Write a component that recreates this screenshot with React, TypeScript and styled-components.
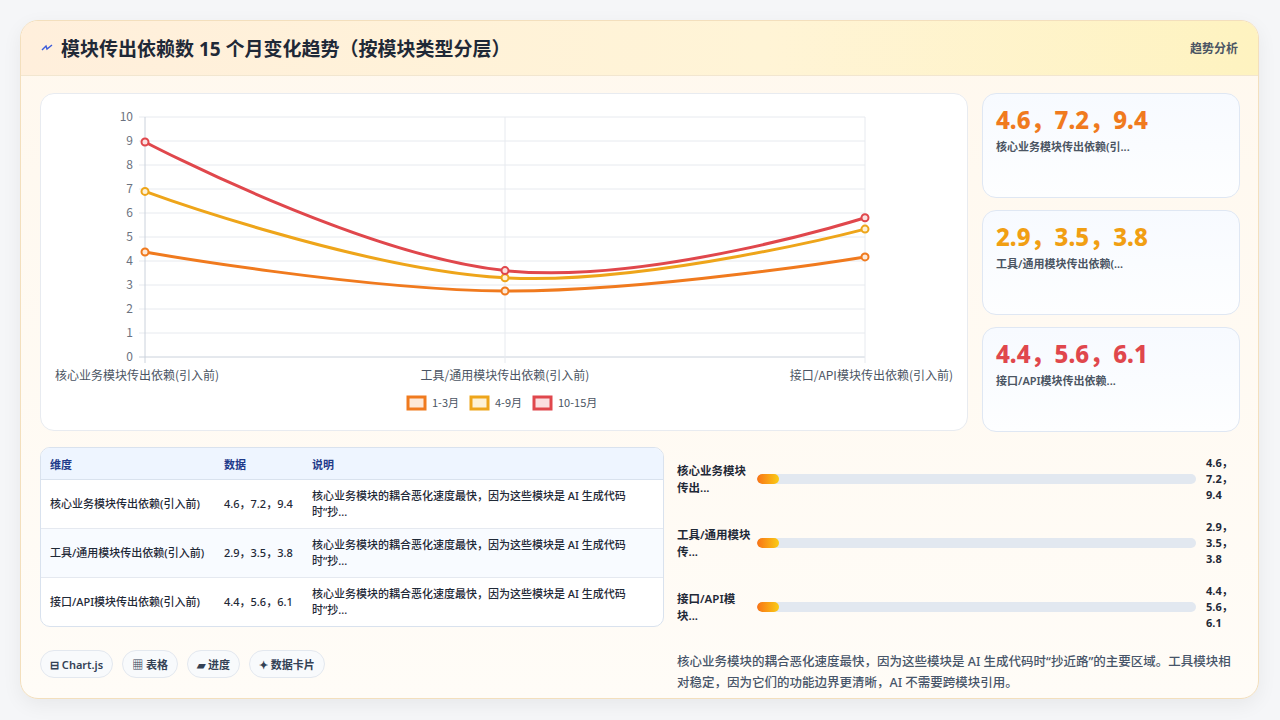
import React from 'react';
import styled, { createGlobalStyle } from 'styled-components';

const Global = createGlobalStyle`
  body { margin: 0; background: #f5f6f8; font-family: "Noto Sans", "Noto Sans CJK SC", sans-serif; }
`;

const Page = styled.div`
  width: 1280px;
  height: 720px;
  padding: 20px;
  box-sizing: border-box;
`;

const Card = styled.div`
  height: 679px;
  width: 1239px;
  box-sizing: border-box;
  border-radius: 18px;
  border: 1px solid #f3dfbd;
  background: linear-gradient(180deg, #fff8ee 0%, #fffcf7 100%);
  box-shadow: 0 6px 20px rgba(0, 0, 0, 0.06);
  overflow: hidden;
  display: flex;
  flex-direction: column;
`;

const Header = styled.div`
  height: 55px;
  box-sizing: border-box;
  padding: 0 20px;
  display: flex;
  align-items: center;
  justify-content: space-between;
  background: linear-gradient(90deg, #ffefdc 0%, #fff4d6 60%, #fef3c0 100%);
  border-bottom: 1px solid #f2e6d0;
`;

const Title = styled.h1`
  margin: 0;
  font-size: 19px;
  font-weight: 700;
  color: #1f2937;
  display: flex;
  align-items: center;
  gap: 8px;
`;

const HeaderTag = styled.span`
  font-size: 12px;
  font-weight: 600;
  color: #4b5563;
`;

const Body = styled.div`
  flex: 1;
  padding: 17px 18px 0 19px;
  display: flex;
  flex-direction: column;
  gap: 15px;
`;

const TopRow = styled.div`
  display: flex;
  gap: 14px;
`;

const ChartCard = styled.div`
  width: 928px;
  height: 338px;
  box-sizing: border-box;
  background: #fff;
  border: 1px solid #e8ebf0;
  border-radius: 14px;
  flex-shrink: 0;
`;

const Stats = styled.div`
  flex: 1;
  display: flex;
  flex-direction: column;
  gap: 12px;
`;

const StatCard = styled.div`
  height: 105px;
  box-sizing: border-box;
  padding: 10px 13px;
  background: linear-gradient(180deg, #f7faff 0%, #fdfeff 100%);
  border: 1px solid #dfe7f3;
  border-radius: 14px;
`;

const StatValue = styled.div<{ $color: string }>`
  font-size: 24px;
  font-weight: 800;
  color: ${(p) => p.$color};
  line-height: 32px;
`;

const StatLabel = styled.div`
  font-size: 11px;
  font-weight: 600;
  color: #4b5563;
  margin-top: 2px;
`;

const BottomRow = styled.div`
  display: flex;
  gap: 13px;
`;

const LeftCol = styled.div`
  width: 624px;
  display: flex;
  flex-direction: column;
  gap: 23px;
`;

const Table = styled.table`
  width: 100%;
  table-layout: fixed;
  border-collapse: separate;
  border-spacing: 0;
  border: 1px solid #d9e2ee;
  border-radius: 10px;
  overflow: hidden;
  font-size: 11px;
  background: #fff;
`;

const Th = styled.th<{ $w?: number }>`
  box-sizing: border-box;
  width: ${(p) => (p.$w ? `${p.$w}px` : 'auto')};
  text-align: left;
  font-weight: 600;
  color: #1e3a8a;
  background: #eef5ff;
  padding: 0 9px;
  height: 32px;
  border-bottom: 1px solid #d9e2ee;
`;

const Td = styled.td`
  color: #1f2937;
  font-weight: 500;
  padding: 0 9px;
  height: 48px;
  line-height: 16px;
  vertical-align: middle;
  tr:not(:last-child) > & { border-bottom: 1px solid #e5e9f0; }
  tr:nth-child(even) > & { background: #f8fbff; }
`;

const Chips = styled.div`
  display: flex;
  gap: 9px;
`;

const Chip = styled.span`
  height: 28px;
  box-sizing: border-box;
  padding: 0 9px;
  display: inline-flex;
  align-items: center;
  gap: 3px;
  font-size: 11px;
  font-weight: 600;
  color: #334155;
  border: 1px solid #e3e8ef;
  background: #f8fafc;
  border-radius: 14px;
`;

const RightCol = styled.div`
  flex: 1;
  display: flex;
  flex-direction: column;
`;

const BarRow = styled.div`
  height: 64px;
  display: flex;
  align-items: center;
  gap: 6px;
`;

const BarLabel = styled.div`
  width: 74px;
  font-size: 11.5px;
  font-weight: 600;
  color: #1f2937;
  line-height: 17px;
`;

const Track = styled.div`
  flex: 1;
  height: 10px;
  border-radius: 5px;
  background: #e2e8f0;
  overflow: hidden;
`;

const Fill = styled.div`
  height: 100%;
  border-radius: 5px;
  background: linear-gradient(90deg, #f97316, #facc15);
`;

const BarValue = styled.div`
  width: 34px;
  padding-left: 4px;
  font-size: 11px;
  font-weight: 700;
  color: #1f2937;
  line-height: 16px;
`;

const Note = styled.p`
  margin: 12px 0 0;
  font-size: 12.5px;
  font-weight: 500;
  color: #475569;
  line-height: 21px;
`;

const series = [
  { name: '1-3月', color: '#f07a1e', fill: '#fde8d7', ys: [4.375, 2.75, 4.17] },
  { name: '4-9月', color: '#eea51a', fill: '#fdf1d5', ys: [6.9, 3.3, 5.33] },
  { name: '10-15月', color: '#e0474c', fill: '#fbdfe0', ys: [8.96, 3.6, 5.8] },
];

const X0 = 104;
const W = 720;
const Y0 = 263;
const U = 24;
const cats = ['核心业务模块传出依赖(引入前)', '工具/通用模块传出依赖(引入前)', '接口/API模块传出依赖(引入前)'];

const pathFor = (ys: number[]) => {
  const p = ys.map((v, i) => [X0 + (i * W) / 2, Y0 - v * U]);
  const dy = p[2][1] - p[0][1];
  const c1 = [p[1][0] - 0.2 * W, p[1][1] - 0.2 * dy];
  const c2 = [p[1][0] + 0.2 * W, p[1][1] + 0.2 * dy];
  return `M${p[0][0]},${p[0][1]} C${p[0][0]},${p[0][1]} ${c1[0]},${c1[1]} ${p[1][0]},${p[1][1]} C${c2[0]},${c2[1]} ${p[2][0]},${p[2][1]} ${p[2][0]},${p[2][1]}`;
};

const Chart = () => (
  <svg width="926" height="336" style={{ display: 'block' }} fontFamily='"Noto Sans CJK SC", sans-serif'>
    {Array.from({ length: 11 }, (_, i) => (
      <g key={i}>
        <line x1={X0 - 6} x2={X0 + W} y1={Y0 - i * U} y2={Y0 - i * U} stroke={i === 0 ? '#cbd2dc' : '#e7eaef'} />
        <text x={X0 - 12} y={Y0 - i * U + 4} textAnchor="end" fontSize="12" fill="#6b7280">{i}</text>
      </g>
    ))}
    {[0, 1, 2].map((i) => (
      <line key={i} x1={X0 + (i * W) / 2} x2={X0 + (i * W) / 2} y1={Y0 - 10 * U} y2={Y0 + 6} stroke={i === 0 ? '#cbd2dc' : '#e7eaef'} />
    ))}
    {cats.map((c, i) => (
      <text key={c} x={i === 0 ? 14 : i === 2 ? 912 : X0 + W / 2} y={286} textAnchor={i === 0 ? 'start' : i === 2 ? 'end' : 'middle'} fontSize="12" fill="#4b5563">{c}</text>
    ))}
    {series.map((s) => (
      <g key={s.name}>
        <path d={pathFor(s.ys)} fill="none" stroke={s.color} strokeWidth="3" />
        {s.ys.map((v, i) => (
          <circle key={i} cx={X0 + (i * W) / 2} cy={Y0 - v * U} r="3.5" fill={s.fill} stroke={s.color} strokeWidth="2" />
        ))}
      </g>
    ))}
    {series.map((s, i) => {
      const x = [367, 430, 493][i];
      return (
        <g key={s.name}>
          <rect x={x} y={303} width="17" height="12" fill={s.fill} stroke={s.color} strokeWidth="3" />
          <text x={x + 24} y={313} fontSize="11" fill="#4b5563">{s.name}</text>
        </g>
      );
    })}
  </svg>
);

const rows = [
  { dim: '核心业务模块传出依赖(引入前)', data: '4.6，7.2，9.4', bar: '核心业务模块传出...', val: ['4.6，', '7.2，', '9.4'], color: '#f07a1e', card: '核心业务模块传出依赖(引...' },
  { dim: '工具/通用模块传出依赖(引入前)', data: '2.9，3.5，3.8', bar: '工具/通用模块传...', val: ['2.9，', '3.5，', '3.8'], color: '#f19f13', card: '工具/通用模块传出依赖(...' },
  { dim: '接口/API模块传出依赖(引入前)', data: '4.4，5.6，6.1', bar: '接口/API模块...', val: ['4.4，', '5.6，', '6.1'], color: '#e0474c', card: '接口/API模块传出依赖...' },
];

const App: React.FC = () => (
  <Page>
    <Global />
    <Card>
      <Header>
        <Title>
          <svg width="12" height="10" viewBox="0 0 12 10"><path d="M1 7 L5 3 L6 6 L11 2" fill="none" stroke="#3b5bdb" strokeWidth="1.4" /></svg>
          模块传出依赖数 15 个月变化趋势（按模块类型分层）
        </Title>
        <HeaderTag>趋势分析</HeaderTag>
      </Header>
      <Body>
        <TopRow>
          <ChartCard><Chart /></ChartCard>
          <Stats>
            {rows.map((r) => (
              <StatCard key={r.dim}>
                <StatValue $color={r.color}>{r.data}</StatValue>
                <StatLabel>{r.card}</StatLabel>
              </StatCard>
            ))}
          </Stats>
        </TopRow>
        <BottomRow>
          <LeftCol>
            <Table>
              <thead>
                <tr><Th $w={174}>维度</Th><Th $w={88}>数据</Th><Th>说明</Th></tr>
              </thead>
              <tbody>
                {rows.map((r) => (
                  <tr key={r.dim}>
                    <Td>{r.dim}</Td>
                    <Td>{r.data}</Td>
                    <Td>核心业务模块的耦合恶化速度最快，因为这些模块是 AI 生成代码时“抄...</Td>
                  </tr>
                ))}
              </tbody>
            </Table>
            <Chips>
              <Chip>⊟ Chart.js</Chip>
              <Chip>▦ 表格</Chip>
              <Chip>▰ 进度</Chip>
              <Chip>✦ 数据卡片</Chip>
            </Chips>
          </LeftCol>
          <RightCol>
            {rows.map((r) => (
              <BarRow key={r.dim}>
                <BarLabel>{r.bar}</BarLabel>
                <Track><Fill style={{ width: '5%' }} /></Track>
                <BarValue>{r.val.map((v) => <div key={v}>{v}</div>)}</BarValue>
              </BarRow>
            ))}
            <Note>核心业务模块的耦合恶化速度最快，因为这些模块是 AI 生成代码时“抄近路”的主要区域。工具模块相对稳定，因为它们的功能边界更清晰，AI 不需要跨模块引用。</Note>
          </RightCol>
        </BottomRow>
      </Body>
    </Card>
  </Page>
);

export default App;
